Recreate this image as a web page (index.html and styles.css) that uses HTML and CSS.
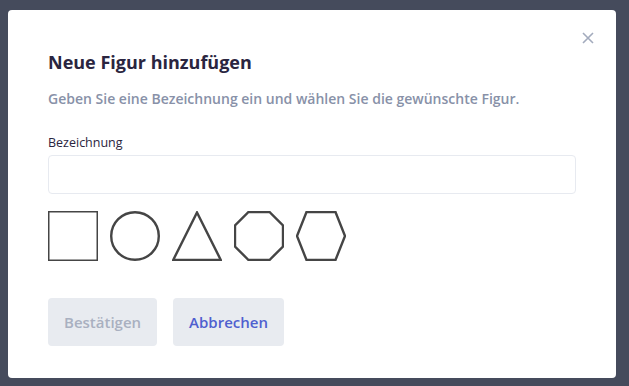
FILE: index.html
```html
<!DOCTYPE html>
<html lang="de">
<head>
  <meta charset="UTF-8" />
  <title>Neue Figur hinzufügen</title>
  <link rel="stylesheet" href="styles.css">
</head>
<body>
  <div class="modal">
    <button class="close" aria-label="Schließen">
      <svg width="12" height="12" viewBox="0 0 12 12">
        <path d="M1 1 L11 11 M11 1 L1 11" stroke="#a3abbd" stroke-width="1.6" fill="none"/>
      </svg>
    </button>

    <h2 class="title">Neue Figur hinzufügen</h2>
    <p class="subtitle">Geben Sie eine Bezeichnung ein und wählen Sie die gewünschte Figur.</p>

    <label class="label" for="name">Bezeichnung</label>
    <input class="input" id="name" type="text">

    <div class="shapes">
      <svg class="shape" viewBox="0 0 50 50"><rect x="0.75" y="0.75" width="48.5" height="48.5" stroke-width="1.5"/></svg>
      <svg class="shape" viewBox="0 0 50 50"><circle cx="25" cy="25" r="23.8"/></svg>
      <svg class="shape" viewBox="0 0 50 50"><polygon points="25,1.5 48.8,49 1.2,49"/></svg>
      <svg class="shape" viewBox="0 0 50 50"><polygon points="14.5,1 35.5,1 49,14.5 49,35.5 35.5,49 14.5,49 1,35.5 1,14.5"/></svg>
      <svg class="shape" viewBox="0 0 50 50"><polygon points="10.5,1 39.5,1 49,25 39.5,49 10.5,49 1,25"/></svg>
    </div>

    <div class="actions">
      <button class="btn btn-disabled" disabled>Bestätigen</button>
      <button class="btn btn-cancel">Abbrechen</button>
    </div>
  </div>
</body>
</html>
```

FILE: styles.css
```css
html, body {
  margin: 0;
  height: 100%;
}

body {
  background: #454b5c;
  font-family: "Open Sans", "Noto Sans", sans-serif;
  padding: 10px 13px 8px 8px;
  box-sizing: border-box;
}

.modal {
  position: relative;
  background: #fff;
  border-radius: 4px;
  height: 368px;
  padding: 0 40px;
  box-sizing: border-box;
  display: flex;
  flex-direction: column;
}

.close {
  position: absolute;
  top: 22px;
  right: 22px;
  border: none;
  background: none;
  padding: 0;
  width: 12px;
  height: 12px;
  cursor: pointer;
}

.title {
  margin: 40px 0 0;
  font-size: 18px;
  font-weight: 700;
  color: #2a2540;
  line-height: 24px;
}

.subtitle {
  margin: 15px 0 0;
  font-size: 14px;
  font-weight: 600;
  color: #8891a8;
  line-height: 20px;
}

.label {
  margin-top: 25px;
  font-size: 12.5px;
  color: #2a2540;
  line-height: 18px;
}

.input {
  margin-top: 3px;
  width: 528px;
  height: 39px;
  box-sizing: border-box;
  border: 1.5px solid #e7eaf0;
  border-radius: 4px;
  outline: none;
  font: inherit;
}

.shapes {
  display: flex;
  gap: 12px;
  margin-top: 17px;
}

.shape {
  width: 50px;
  height: 50px;
  fill: none;
  stroke: #454545;
  stroke-width: 2.4;
}

.actions {
  display: flex;
  gap: 16px;
  margin-top: 37px;
}

.btn {
  height: 48px;
  border: none;
  border-radius: 4px;
  background: #e8ebf0;
  font-family: inherit;
  font-size: 15px;
  font-weight: 600;
  padding: 0 16px;
  cursor: pointer;
}

.btn-disabled {
  width: 109px;
  color: #a9b0c0;
  cursor: default;
}

.btn-cancel {
  width: 111px;
  color: #4f5fcf;
}
```
